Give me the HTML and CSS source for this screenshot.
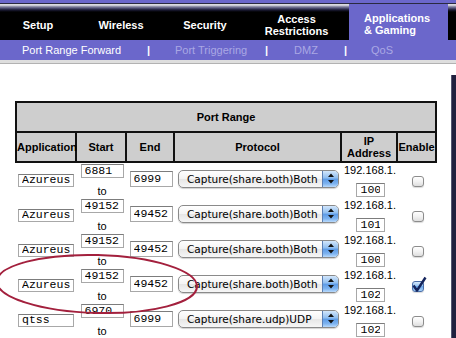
FILE: index.html
```html
<!DOCTYPE html>
<html lang="en">
<head>
  <meta charset="UTF-8">
  <meta name="viewport" content="width=device-width, initial-scale=1.0">
  <title>Applications &amp; Gaming - Port Range Forward</title>
  <link rel="stylesheet" href="styles.css">
</head>
<body>
  <div class="topline"></div>
  <div class="nav">
    <div class="nav-item setup">Setup</div>
    <div class="nav-item wireless">Wireless</div>
    <div class="nav-item security">Security</div>
    <div class="nav-item access">Access<br>Restrictions</div>
    <div class="nav-item active">Applications<br>&amp; Gaming</div>
    <div class="nav-end"></div>
  </div>
  <div class="subnav">
    <span class="sub current">Port Range Forward</span>
    <span class="sep">|</span>
    <span class="sub trigger">Port Triggering</span>
    <span class="sep">|</span>
    <span class="sub dmz">DMZ</span>
    <span class="sep">|</span>
    <span class="sub qos">QoS</span>
  </div>
  <div class="rule"></div>

  <div class="main">
    <div class="content">
      <table class="ports">
        <colgroup>
          <col class="c-app"><col class="c-start"><col class="c-end"><col class="c-proto"><col class="c-ip"><col class="c-en">
        </colgroup>
        <thead>
          <tr><th colspan="6">Port Range</th></tr>
          <tr>
            <th>Application</th>
            <th>Start</th>
            <th>End</th>
            <th>Protocol</th>
            <th>IP<br>Address</th>
            <th>Enable</th>
          </tr>
        </thead>
        <tbody id="rows"></tbody>
      </table>
    </div>
    <div class="sidebar"></div>
  </div>

  <svg class="circle" width="210" height="72" viewBox="0 0 210 72">
    <ellipse cx="97" cy="35" rx="100" ry="29" transform="rotate(1.5 97 35)" fill="none" stroke="#a3203d" stroke-width="2"/>
  </svg>

  <script>
    const rows = [
      { app: 'Azureus', start: '6881', end: '6999', proto: 'Capture(share.both)Both', ip: '100', on: false },
      { app: 'Azureus', start: '49152', end: '49452', proto: 'Capture(share.both)Both', ip: '101', on: false },
      { app: 'Azureus', start: '49152', end: '49452', proto: 'Capture(share.both)Both', ip: '100', on: false },
      { app: 'Azureus', start: '49152', end: '49452', proto: 'Capture(share.both)Both', ip: '102', on: true },
      { app: 'qtss', start: '6970', end: '6999', proto: 'Capture(share.udp)UDP', ip: '102', on: false }
    ];

    const arrows = '<svg width="8" height="11" viewBox="0 0 8 11"><path d="M4 0.5 L7 4 H1 Z M4 10.5 L7 7 H1 Z" fill="#111"/></svg>';
    const tick = '<svg class="tick" width="16" height="17" viewBox="0 0 16 17"><path d="M2.5 9.5 L6 14.5 L14.5 1.5" fill="none" stroke="#14245c" stroke-width="2.4" stroke-linejoin="round"/></svg>';

    const tbody = document.getElementById('rows');
    rows.forEach(r => {
      const tr = document.createElement('tr');
      tr.innerHTML = `
        <td><input class="field app" value="${r.app}" readonly></td>
        <td><input class="field start" value="${r.start}" readonly><div class="to">to</div></td>
        <td><input class="field end" value="${r.end}" readonly></td>
        <td><div class="select"><span class="select-text">${r.proto}</span><span class="select-btn">${arrows}</span></div></td>
        <td><div class="ip-prefix">192.168.1.</div><input class="field ip" value="${r.ip}" readonly></td>
        <td><span class="check${r.on ? ' on' : ''}">${r.on ? tick : ''}</span></td>`;
      tbody.appendChild(tr);
    });
  </script>
</body>
</html>
```

FILE: styles.css
```css
body {
  margin: 0;
  width: 456px;
  height: 338px;
  overflow: hidden;
  position: relative;
  background: #fff;
  font-family: "Liberation Sans", Arial, sans-serif;
}

/* Top navigation */
.topline {
  height: 3px;
  background: #6b67cb;
  border-bottom: 1px solid #2a2a40;
}

.nav {
  display: flex;
  height: 36px;
  background: linear-gradient(to bottom, #c8c8d0 0, #ececf0 1px, #a4a4b8 2px, #55557a 4px, #1a1a34 6px, #000 8px);
}

.nav-item {
  display: flex;
  align-items: center;
  justify-content: center;
  box-sizing: border-box;
  padding-top: 5px;
  color: #fff;
  font-size: 11px;
  font-weight: bold;
  line-height: 12px;
  text-align: center;
}

.setup { width: 76px; }
.wireless { width: 90px; }
.security { width: 78px; }
.access { width: 105px; }

.nav-item.active {
  width: 99px;
  justify-content: flex-start;
  padding-left: 15px;
  padding-top: 4px;
  text-align: left;
  background: #6b67cb;
}

.nav-end {
  flex: 1;
}

.subnav {
  display: flex;
  align-items: center;
  height: 20px;
  background: #6b67cb;
  font-size: 11px;
  color: #aaa8e4;
}

.sub {
  box-sizing: border-box;
}

.sub.current {
  width: 146px;
  padding-left: 22px;
  color: #fff;
}

.sub.trigger {
  width: 113px;
  padding-left: 24px;
}

.sub.dmz {
  width: 74px;
  text-align: center;
}

.sub.qos {
  width: 68px;
  text-align: center;
}

.sep {
  width: 5px;
  text-align: center;
  color: #fff;
  font-weight: bold;
}

.rule {
  height: 3px;
  background: #dedede;
  border-bottom: 1px solid #b2b2b2;
}

/* Main area */
.main {
  display: flex;
  height: 274px;
}

.content {
  flex: 1;
  padding: 37px 0 0 15px;
}

.sidebar {
  width: 4px;
  margin-top: 11px;
  background: #20203e;
  border-left: 1px solid #555570;
}

/* Port table */
.ports {
  width: 422px;
  border-collapse: separate;
  border-spacing: 0;
  table-layout: fixed;
  font-size: 11px;
}

.c-app { width: 62px; }
.c-start { width: 50px; }
.c-end { width: 48px; }
.c-proto { width: 167px; }
.c-ip { width: 56px; }
.c-en { width: 39px; }

.ports th {
  height: 28px;
  padding: 0;
  background: #cecece;
  border-right: 2px solid #111;
  border-bottom: 2px solid #111;
  font-weight: bold;
  line-height: 12px;
  text-align: center;
}

.ports thead tr:first-child th {
  border-top: 2px solid #111;
}

.ports th:first-child {
  border-left: 2px solid #111;
}

.ports td {
  height: 35px;
  padding: 0;
  text-align: center;
  vertical-align: middle;
}

.field {
  display: block;
  box-sizing: border-box;
  margin: 0 auto;
  padding: 0 3px 2px;
  border: 1px solid #a8a8a8;
  border-top-color: #7c7c7c;
  background: #fff;
  color: #000;
  font-family: "Liberation Mono", "Courier New", monospace;
  font-size: 11.5px;
  line-height: 11px;
  outline: none;
}

.field.app {
  width: 56px;
  height: 13px;
  margin-top: 0;
}

.field.start {
  width: 43px;
  height: 14px;
  margin-bottom: 7px;
}

.field.end {
  width: 43px;
  height: 16px;
  margin-bottom: 3px;
}

.field.ip {
  width: 29px;
  height: 14px;
  margin-top: 7px;
  padding: 0 4px 2px;
}

.to,
.ip-prefix {
  line-height: 12px;
}

.select {
  display: flex;
  align-items: stretch;
  box-sizing: border-box;
  width: 161px;
  height: 18px;
  margin: 0 auto 4px;
  border: 1px solid #8a8a8a;
  border-radius: 5px;
  background: linear-gradient(to bottom, #fff 0, #f4f4f4 50%, #e6e6e6 51%, #f6f6f6 100%);
  box-shadow: 0 1px 1px rgba(0, 0, 0, 0.18);
  overflow: hidden;
}

.select-text {
  flex: 1;
  padding-left: 8px;
  text-align: left;
  font-family: "DejaVu Sans", Verdana, sans-serif;
  font-size: 10.5px;
  line-height: 16px;
  white-space: nowrap;
}

.select-btn {
  display: flex;
  align-items: center;
  justify-content: center;
  width: 15px;
  border-left: 1px solid #5b7fb4;
  background: linear-gradient(to bottom, #d2e6fb 0, #8dbcef 45%, #5c9ae6 50%, #7fb4f0 80%, #b9dafc 100%);
}

.check {
  position: relative;
  display: inline-block;
  box-sizing: border-box;
  width: 12px;
  height: 11px;
  margin-top: 2px;
  border: 1px solid #8c8c8c;
  border-radius: 3px;
  background: linear-gradient(to bottom, #fff 0, #f2f2f2 50%, #dedede 100%);
  box-shadow: 0 1px 1px rgba(0, 0, 0, 0.15);
  vertical-align: middle;
}

.check.on {
  border-color: #4a6ea8;
  background: linear-gradient(to bottom, #d6e9fc 0, #96c4f2 45%, #6ba7ea 50%, #a9d2fa 100%);
}

.tick {
  position: absolute;
  left: -2px;
  top: -6px;
}

/* Annotation drawn over the table */
.circle {
  position: absolute;
  left: 0;
  top: 249px;
  overflow: visible;
  pointer-events: none;
}
```
